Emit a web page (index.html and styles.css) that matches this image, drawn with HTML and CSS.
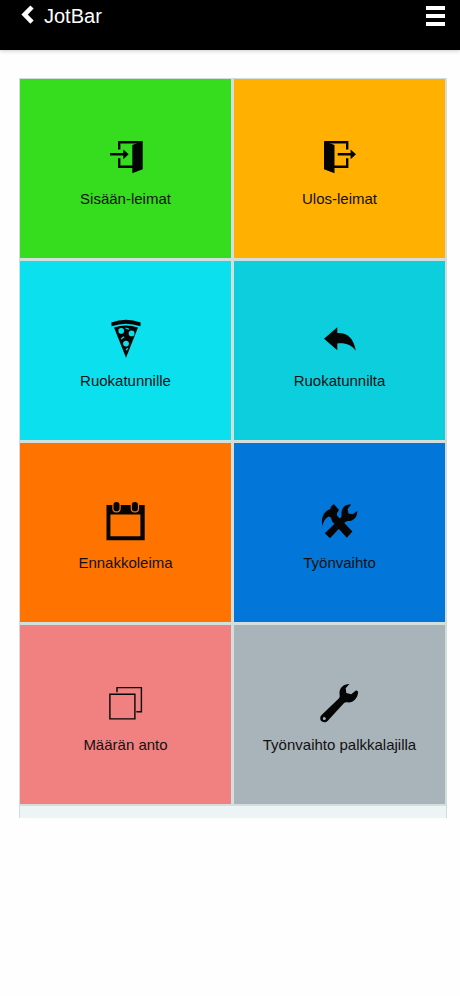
FILE: index.html
```html
<!DOCTYPE html>
<html lang="fi">
<head>
    <meta charset="UTF-8">
    <meta name="viewport" content="width=device-width, initial-scale=1.0">
    <title>JotBar</title>
    <link rel="stylesheet" href="styles.css">
</head>
<body>
    <header class="navbar">
        <a class="back" href="#">
            <svg class="back-icon" width="14" height="20" viewBox="0 0 14 20"><path d="M12 2L4.6 9.6L12 17.2" fill="none" stroke="#fff" stroke-width="4.6"/></svg>
            <span>JotBar</span>
        </a>
        <button class="menu-btn" aria-label="Valikko">
            <span></span>
            <span></span>
            <span></span>
        </button>
    </header>

    <main class="panel">
        <div class="tiles">
            <a class="tile tile-in" href="#">
                <svg class="icon" viewBox="0 0 40 40">
                    <path class="line" d="M13.2 12.5V5.2H36M13.2 21.3V29.7H27M4 17.3H19"/>
                    <path d="M26.3 8L36.7 4V32.3L26.3 36.3ZM17.3 12.4L22.7 17.3L17.3 22.2Z"/>
                </svg>
                <span>Sisään-leimat</span>
            </a>
            <a class="tile tile-out" href="#">
                <svg class="icon" viewBox="0 0 40 40">
                    <path class="line" d="M5 5.2H27.2V12.5M27.2 21.3V29.7H14M17.7 17.3H32"/>
                    <path d="M4 4L14.5 8V36.3L4 32.3ZM30.6 12.4L36 17.3L30.6 22.2Z"/>
                </svg>
                <span>Ulos-leimat</span>
            </a>
            <a class="tile tile-lunch" href="#">
                <svg class="icon" viewBox="0 0 40 40">
                    <path d="M5.3 3.4Q20 -1.8 34.7 3.4L34.4 7.2Q20 2.2 5.6 7.2Z"/>
                    <path d="M8 8.6Q20 4.6 32 8.6L20 38.7Z"/>
                    <g class="hole">
                        <circle cx="15.2" cy="11.9" r="2.8"/>
                        <circle cx="25.6" cy="14.4" r="2.9"/>
                        <circle cx="20" cy="24.6" r="2.9"/>
                    </g>
                    <path class="hole-line" d="M19.6 9L23 10.2M15.4 20.2Q16 18.4 18.2 17.8M20.2 31.4Q20.4 30 22 29.4"/>
                </svg>
                <span>Ruokatunnille</span>
            </a>
            <a class="tile tile-return" href="#">
                <svg class="icon" viewBox="0 0 40 40">
                    <path d="M4 19.7L17.3 8.3V14C27 13.5 33.5 18.5 35.8 31.7C31 25.5 26 23.8 17.3 24.4V31.2Z"/>
                </svg>
                <span>Ruokatunnilta</span>
            </a>
            <a class="tile tile-advance" href="#">
                <svg class="icon" viewBox="0 0 40 40">
                    <path fill-rule="evenodd" d="M.5 4H38.7V39.3H.5ZM4.4 13.5V35.2H34.4V13.5Z"/>
                    <rect class="ring" x="6.9" y=".4" width="7.2" height="10.4" rx="3.4"/>
                    <rect class="ring" x="25.3" y=".4" width="7.2" height="10.4" rx="3.4"/>
                </svg>
                <span>Ennakkoleima</span>
            </a>
            <a class="tile tile-switch" href="#">
                <svg class="icon" viewBox="0 0 40 40">
                    <path d="M2.3 25.3C1 17.5 3 10.5 10.3 8L11 5.6L13.8 3L19 9L17 12V14.6L32.4 30.4L26.8 36.8L12.2 20.4L11 16.6L8.6 15.6C5 17.6 3.4 20.5 2.3 25.3Z"/>
                    <path d="M4.8 32.2L20 17.6C22 15.6 21.4 14 21.5 11.6C21.8 6.6 25.5 3 31.2 3.6L27.6 8L28.4 12.6L32.8 13.2L37.2 10C37.6 16 33.8 19.8 29.4 20C27.2 20.1 26.2 20.2 24.8 21.6L10 37.2Z"/>
                </svg>
                <span>Työnvaihto</span>
            </a>
            <a class="tile tile-amount" href="#">
                <svg class="icon" viewBox="0 0 40 40">
                    <path class="line thin" d="M3.9 11.3H28.9V35.9H3.9ZM11 9.2V4.6H35.4V28.8H30.4"/>
                </svg>
                <span>Määrän anto</span>
            </a>
            <a class="tile tile-paytype" href="#">
                <svg class="icon" viewBox="0 0 40 40">
                    <path fill-rule="evenodd" d="M1.3 32.3L18.8 15.4C20.2 13.8 19.6 12.5 19.5 10.3C19.4 5.2 23.2 1 29.4 1.1L25.7 5.2L26.3 10L31.2 11.3L36.2 7.3L38.2 8.7C37.6 15.5 33.6 19.5 28.4 19.4C26.3 19.3 25 19.3 23.6 20.6L7.6 38C5.8 39.8 3.3 39.7 1.6 38.3C-.2 36.8-.2 34 1.3 32.3ZM4.3 33.9A1.5 1.5 0 1 0 4.3 36.9A1.5 1.5 0 1 0 4.3 33.9Z"/>
                </svg>
                <span>Työnvaihto palkkalajilla</span>
            </a>
        </div>
    </main>
</body>
</html>
```

FILE: styles.css
```css
* {
    box-sizing: border-box;
}

body {
    font-family: "Liberation Sans", Arial, sans-serif;
    margin: 0;
    background-color: #fefefe;
    color: #111;
}

.navbar {
    display: flex;
    justify-content: space-between;
    align-items: flex-start;
    height: 50px;
    padding: 5px 15px 0 20px;
    background-color: #000;
    box-shadow: 0 1px 4px rgba(0, 0, 0, 0.2);
}

.back {
    display: flex;
    gap: 10px;
    color: #fff;
    font-size: 20px;
    line-height: 22px;
    text-decoration: none;
}

.menu-btn {
    display: flex;
    flex-direction: column;
    gap: 4px;
    margin: 1px 0 0;
    padding: 0;
    border: none;
    background: none;
    cursor: pointer;
}

.menu-btn span {
    width: 19px;
    height: 4px;
    background-color: #fff;
}

.panel {
    width: 428px;
    margin: 28px 0 0 19px;
    padding-bottom: 12px;
    border: 1px solid #d3dcdc;
    border-bottom: none;
    background-color: #edf4f6;
}

.tiles {
    display: grid;
    grid-template-columns: 211px 211px;
    justify-content: space-between;
    grid-auto-rows: 179px;
    row-gap: 3px;
    padding-right: 1px;
    border-bottom: 2px solid #d5dedd;
    background-color: #d2dfdc;
}

.tile {
    display: flex;
    flex-direction: column;
    align-items: center;
    gap: 13px;
    padding-top: 58px;
    color: #111;
    font-size: 15px;
    line-height: 18px;
    text-decoration: none;
    white-space: nowrap;
}

.icon {
    width: 40px;
    height: 40px;
    flex-shrink: 0;
    fill: #050505;
}

.line {
    fill: none;
    stroke: #050505;
    stroke-width: 2.4;
}

.thin {
    stroke-width: 1.4;
}

.hole {
    fill: #0be1ee;
}

.hole-line {
    fill: none;
    stroke: #0be1ee;
    stroke-width: 1.2;
}

.ring {
    stroke: #ff7400;
    stroke-width: 1.2;
}

.tile-in {
    background-color: #36dc1e;
}

.tile-out {
    background-color: #ffb000;
}

.tile-lunch {
    background-color: #0be1ee;
}

.tile-return {
    background-color: #0dcedd;
}

.tile-advance {
    background-color: #ff7400;
}

.tile-switch {
    background-color: #0277d9;
}

.tile-amount {
    background-color: #f18181;
}

.tile-paytype {
    background-color: #a9b4ba;
}
```
